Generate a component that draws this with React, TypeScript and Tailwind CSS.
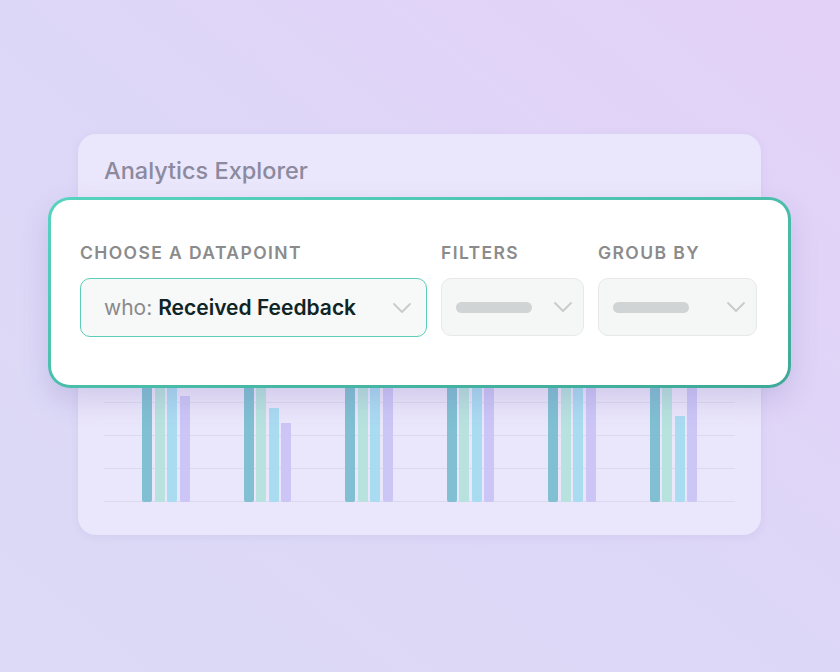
import React from 'react';

const groups = [
  [120, 120, 120, 106],
  [120, 120, 94, 79],
  [120, 120, 120, 120],
  [120, 120, 120, 120],
  [120, 120, 120, 120],
  [120, 120, 86, 120],
];

const barColors = ['bg-[#80c0d2]', 'bg-[#b7e2de]', 'bg-[#a9dbf1]', 'bg-[#cbc6f6]'];

const Chevron = () => (
  <svg width="20" height="12" viewBox="0 0 20 12" fill="none">
    <path d="M2 2l8 8 8-8" stroke="#c9cbcb" strokeWidth="1.8" strokeLinecap="round" strokeLinejoin="round" />
  </svg>
);

const Placeholder = () => (
  <div className="flex h-[58px] items-center justify-between rounded-[10px] border border-[#e7e8e8] bg-[#f5f6f6] pl-[14px] pr-[10px]">
    <div className="h-[11px] w-[76px] rounded-full bg-[#d1d4d4]" />
    <Chevron />
  </div>
);

const App = () => {
  return (
    <div className="relative h-[672px] w-[840px] overflow-hidden bg-linear-to-tr from-[#dcdaf6] via-[#ddd7f7] to-[#e4d1f8] font-['Inter',sans-serif]">
      <div className="relative ml-[78px] mt-[134px] h-[401px] w-[683px] rounded-[18px] bg-[#eae6fb] shadow-[0_2px_8px_rgba(140,120,200,0.12)]">
        <h2 className="pl-[26px] pt-[22px] text-[23.5px] font-medium leading-[30px] text-[#8b8a9e]">
          Analytics Explorer
        </h2>

        <div className="absolute bottom-[33px] left-[26px] right-[26px] h-[120px]">
          <div className="absolute inset-0 flex flex-col justify-between pt-[20px]">
            <div className="h-px bg-[#dcd8ee]" />
            <div className="h-px bg-[#dcd8ee]" />
            <div className="h-px bg-[#dcd8ee]" />
            <div className="h-px bg-[#dcd8ee]" />
          </div>
          <div className="relative flex h-full items-end gap-[54px] pl-[38px]">
            {groups.map((g, i) => (
              <div key={i} className="flex items-end gap-[2.5px]">
                {g.map((h, j) => (
                  <div key={j} className={`w-[10px] rounded-b-[2px] ${barColors[j]}`} style={{ height: h }} />
                ))}
              </div>
            ))}
          </div>
        </div>

        <div className="absolute left-[-30px] top-[63px] h-[191px] w-[743px] rounded-[22px] bg-linear-to-br from-[#56d4c0] to-[#3fa897] p-[3px] shadow-[0_12px_28px_rgba(110,90,170,0.2)]">
          <div className="h-full rounded-[19px] bg-white px-[29px] pt-[43px]">
            <div className="grid grid-cols-[347px_143px_159px] gap-x-[14px]">
              <div className="text-[17.5px] font-semibold uppercase leading-[20px] tracking-[0.08em] text-[#8b8b8b]">Choose a datapoint</div>
              <div className="text-[17.5px] font-semibold uppercase leading-[20px] tracking-[0.08em] text-[#8b8b8b]">Filters</div>
              <div className="text-[17.5px] font-semibold uppercase leading-[20px] tracking-[0.08em] text-[#8b8b8b]">Groub by</div>

              <div className="mt-[15px] flex h-[59px] items-center justify-between rounded-[10px] border-[1.5px] border-[#5ccdb8] bg-[#f7f8f8] pl-[23px] pr-[14px]">
                <span className="text-[21px] leading-none">
                  <span className="text-[#8a8a8a]">who: </span>
                  <span className="font-semibold text-[#0f2424]">Received Feedback</span>
                </span>
                <Chevron />
              </div>
              <div className="mt-[15px]">
                <Placeholder />
              </div>
              <div className="mt-[15px]">
                <Placeholder />
              </div>
            </div>
          </div>
        </div>
      </div>
    </div>
  );
};

export default App;
